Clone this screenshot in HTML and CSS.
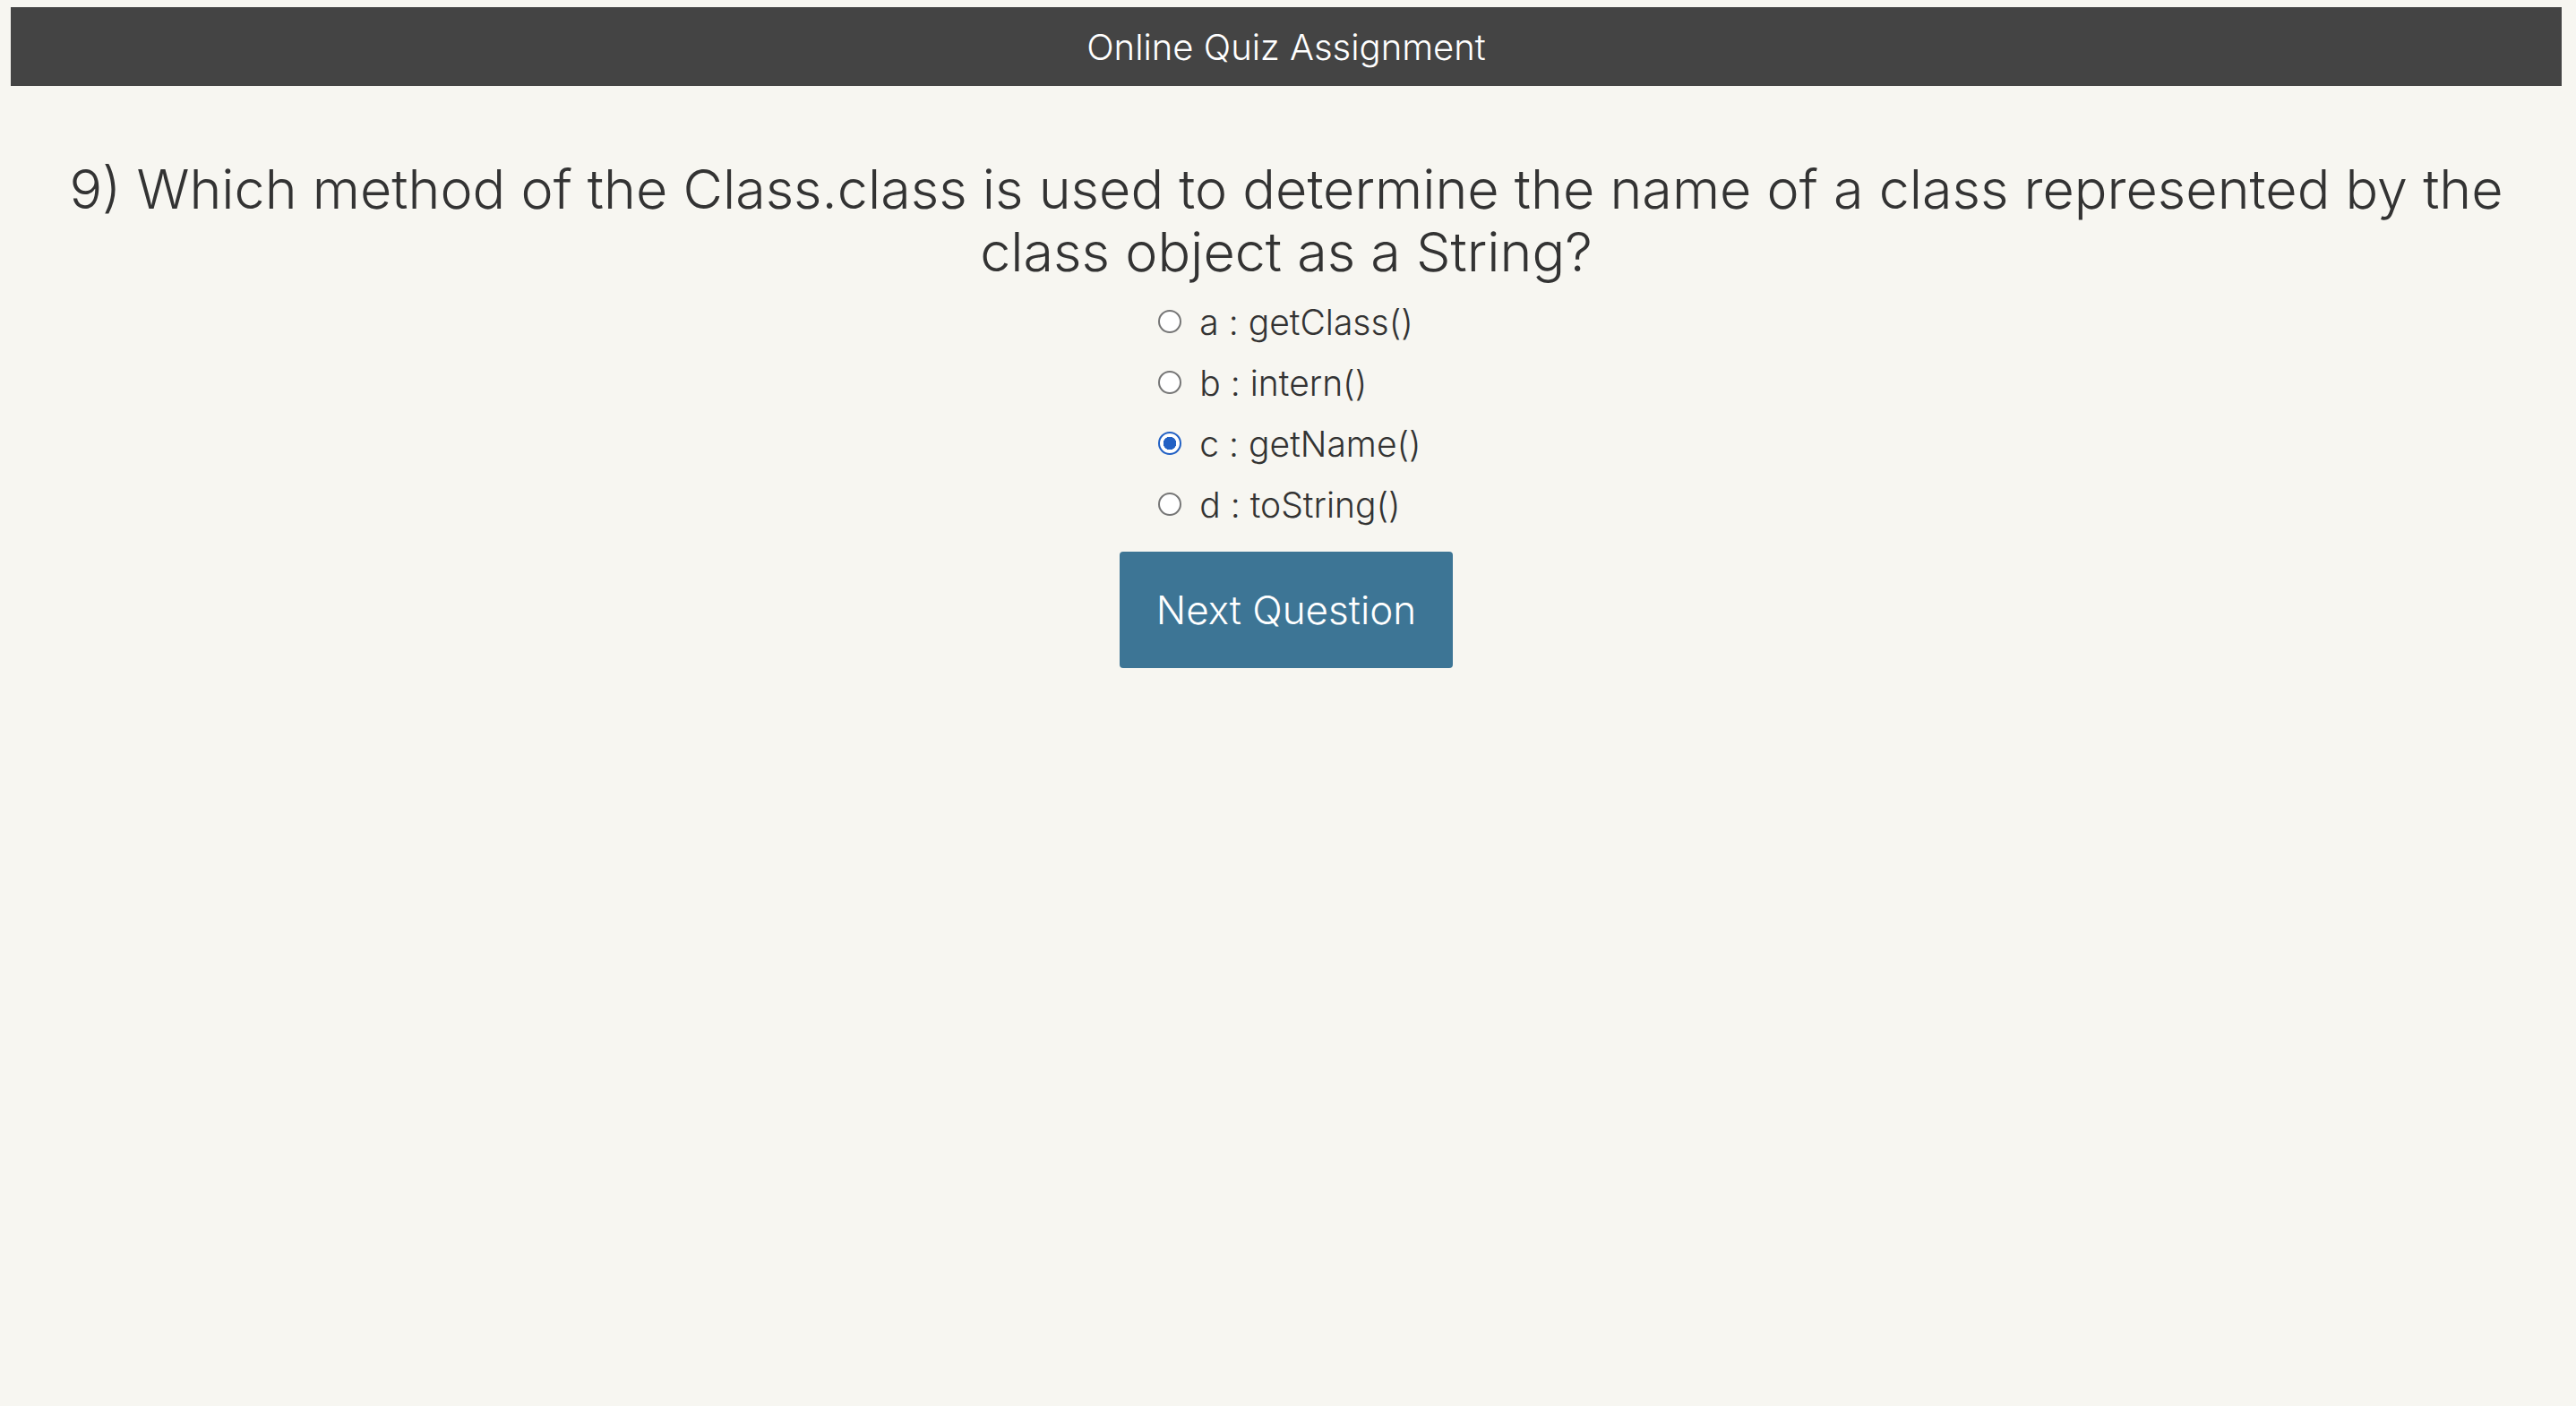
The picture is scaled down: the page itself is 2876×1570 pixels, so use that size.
FILE: index.html
```html
<!DOCTYPE html>
<html>
<head>
<meta charset="utf-8">
<title>Online Quiz Assignment</title>
<link rel="stylesheet" href="styles.css">
</head>
<body>
<header class="topbar">Online Quiz Assignment</header>
<main class="quiz">
  <h2 class="question">9) Which method of the Class.class is used to determine the name of a class represented by the class object as a String?</h2>
  <form class="options">
    <label class="option"><input type="radio" name="ans" class="radio"><span>a : getClass()</span></label>
    <label class="option"><input type="radio" name="ans" class="radio"><span>b : intern()</span></label>
    <label class="option"><input type="radio" name="ans" class="radio" checked><span>c : getName()</span></label>
    <label class="option"><input type="radio" name="ans" class="radio"><span>d : toString()</span></label>
  </form>
  <button class="next" type="button">Next Question</button>
</main>
</body>
</html>
```
FILE: styles.css
```css
html, body {
  background: #f7f6f1;
}
body {
  margin: 8px 16px 8px 12px;
  font-family: Inter, "Open Sans", sans-serif;
  color: #333333;
}
.topbar {
  height: 88px;
  background: #444444;
  color: #ffffff;
  font-size: 40px;
  font-weight: 300;
  display: flex;
  align-items: center;
  justify-content: center;
}
.quiz {
  display: flex;
  flex-direction: column;
  align-items: center;
}
.question {
  margin: 80px 40px 9px;
  font-size: 61px;
  line-height: 70px;
  font-weight: 300;
  text-align: center;
}
.options {
  display: flex;
  flex-direction: column;
  align-items: flex-start;
  margin-left: 8px;
}
.option {
  height: 68px;
  display: flex;
  align-items: center;
  font-size: 39px;
  font-weight: 300;
}
.radio {
  appearance: none;
  -webkit-appearance: none;
  box-sizing: border-box;
  width: 26px;
  height: 26px;
  margin: 0 20px 0 0;
  border: 2.5px solid #767676;
  border-radius: 50%;
  background: #ffffff;
}
.radio:checked {
  border-color: #2160c4;
  background: radial-gradient(circle, #2160c4 0 7px, #ffffff 7.5px);
}
.next {
  margin-top: 19px;
  width: 372px;
  height: 130px;
  border: none;
  border-radius: 4px;
  background: #3d7595;
  color: #ffffff;
  font-family: Inter, "Open Sans", sans-serif;
  font-size: 44px;
  font-weight: 300;
}
```
